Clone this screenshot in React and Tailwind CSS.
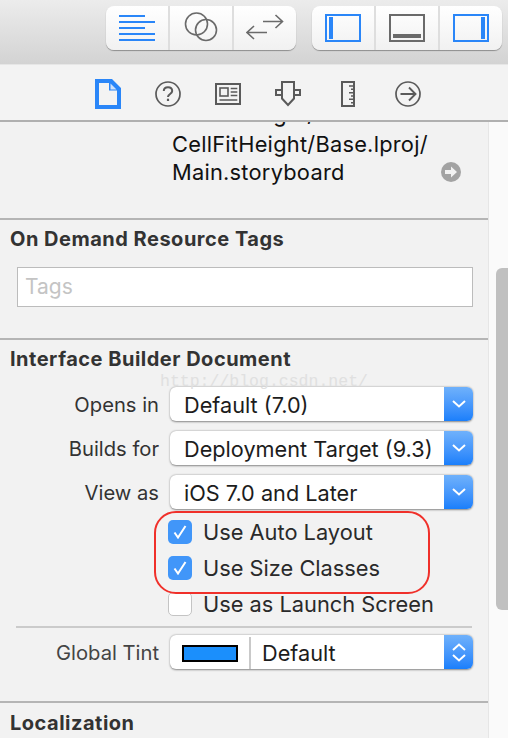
import React from 'react'

const BLUE = '#2a86f8'
const GRAY = '#6a6a6a'
const DARK = '#5a5a5a'

const ToolButton = ({ className, children }) => (
  <div className={`flex items-center justify-center border-r-2 border-[#dedede] last:border-r-0 ${className}`}>
    {children}
  </div>
)

const Group = ({ children }) => (
  <div className="flex h-[44px] w-[190px] rounded-[8px] bg-gradient-to-b from-white to-[#f1f1f1] shadow-[0_1px_1px_rgba(0,0,0,0.35)]">
    {children}
  </div>
)

const LinesIcon = () => (
  <svg width="36" height="28" viewBox="0 0 36 28" fill="none" stroke={BLUE} strokeWidth="2">
    <path d="M0 2h26M0 8h36M0 14h26M0 20h36M0 26h36" />
  </svg>
)

const CirclesIcon = () => (
  <svg width="34" height="32" viewBox="0 0 34 32" fill="none" stroke={GRAY} strokeWidth="1.6">
    <circle cx="12.5" cy="12" r="11" />
    <circle cx="22" cy="18" r="10.5" />
  </svg>
)

const SwapIcon = () => (
  <svg width="38" height="28" viewBox="0 0 38 28" fill="none" stroke={GRAY} strokeWidth="1.6">
    <path d="M17 7.5h20M29.5 1l7 6.5-7 6.5" />
    <path d="M21 18.5H1M8 12l-7 6.5L8 25" />
  </svg>
)

const PanelIcon = ({ color, bar }) => (
  <svg width="36" height="28" viewBox="0 0 36 28" fill="none">
    <rect x="1" y="1" width="34" height="26" stroke={color} strokeWidth="2" />
    <path d={bar} fill={color} />
  </svg>
)

const DocIcon = () => (
  <svg width="26" height="30" viewBox="0 0 26 30">
    <path fillRule="evenodd" fill={BLUE} d="M0 0h17l9 9v21H0zM4 4v22h18V11.5h-8V4z" />
    <path d="M15.5 4.5l6 6h-6z" fill="#cfe2fb" />
  </svg>
)

const HelpIcon = () => (
  <svg width="26" height="26" viewBox="0 0 26 26" fill="none" stroke={DARK} strokeWidth="1.7">
    <circle cx="13" cy="13" r="12" />
    <path d="M8.8 10c0-5 8.4-5 8.4 0 0 3-4.2 3-4.2 6" strokeWidth="2" />
    <path d="M13 17.7v2.3" strokeWidth="2.2" />
  </svg>
)

const NewsIcon = () => (
  <svg width="26" height="22" viewBox="0 0 26 22" fill="none" stroke={DARK} strokeWidth="2">
    <rect x="1" y="1" width="24" height="20" />
    <rect x="5" y="5" width="8" height="8" strokeWidth="1.6" />
    <path d="M15.7 5.5h6.6M15.7 9h6.6M15.7 12.5h6.6M4.5 17h17.8" strokeWidth="1.6" />
  </svg>
)

const PinIcon = () => (
  <svg width="26" height="26" viewBox="0 0 26 26" fill="none" stroke={DARK} strokeWidth="2">
    <path d="M7 1h12v16.5l-6 6.5-6-6.5z" />
    <path d="M7 9H1v5h6M19 9h6v5h-6" />
  </svg>
)

const RulerIcon = () => (
  <svg width="14" height="26" viewBox="0 0 14 26" fill="none" stroke={DARK} strokeWidth="2">
    <rect x="1" y="1" width="12" height="24" />
    <path d="M8 5h4M10 8.3h2M8 11.7h4M10 15h2M8 18.3h4M10 21.7h2" strokeWidth="1.5" />
  </svg>
)

const ArrowCircleIcon = () => (
  <svg width="26" height="26" viewBox="0 0 26 26" fill="none" stroke={DARK} strokeWidth="1.7">
    <circle cx="13" cy="13" r="12" />
    <path d="M5.5 13h15M14 6.5l6.5 6.5-6.5 6.5" strokeWidth="1.9" />
  </svg>
)

const Tab = ({ children }) => <div className="flex w-[60px] items-center justify-center">{children}</div>

const Heading = ({ children }) => (
  <h2 className="pl-[10px] text-[20px] leading-[24px] font-bold tracking-[0.5px] text-[#333]">{children}</h2>
)

const Divider = () => <div className="h-[2px] bg-[#b5b5b5]" />

const Chevron = ({ double }) => (
  <div className="flex w-[29px] flex-col items-center justify-center gap-[3px] rounded-r-[6px] bg-gradient-to-b from-[#6fb1fb] to-[#197ffb]">
    {double && (
      <svg width="14" height="8" viewBox="0 0 14 8" fill="none" stroke="white" strokeWidth="2">
        <path d="M1 7l6-5.5L13 7" />
      </svg>
    )}
    <svg width="14" height="8" viewBox="0 0 14 8" fill="none" stroke="white" strokeWidth="2">
      <path d="M1 1l6 5.5L13 1" />
    </svg>
  </div>
)

const Select = ({ children, double }) => (
  <div className="flex h-[34px] w-[303px] rounded-[6px] bg-white shadow-[0_0.5px_2px_rgba(0,0,0,0.45)]">
    <div className="flex flex-1 items-center pt-[2px] text-[21.7px] text-[#1c1c1c]">{children}</div>
    <Chevron double={double} />
  </div>
)

const Row = ({ label, children, color = 'text-[#333]' }) => (
  <div className="flex items-center gap-[11px]">
    <div className={`w-[159px] pt-[2px] text-right text-[20.2px] ${color}`}>{label}</div>
    {children}
  </div>
)

const Check = ({ checked, label }) => (
  <div className="flex h-[24px] items-center gap-[11px] pl-[168px]">
    {checked ? (
      <div className="flex h-[24px] w-[24px] items-center justify-center rounded-[5px] bg-[#4196f9]">
        <svg width="14" height="14" viewBox="0 0 14 14" fill="none" stroke="white" strokeWidth="2">
          <path d="M1.5 7.5l3.5 5L12.5 1" />
        </svg>
      </div>
    ) : (
      <div className="h-[24px] w-[24px] rounded-[5px] border border-[#c4c4c4] bg-white" />
    )}
    <span className="pt-[1px] text-[21.8px] text-[#2a2a2a]">{label}</span>
  </div>
)

export default function App() {
  return (
    <div className="relative flex h-[738px] w-[508px] flex-col overflow-hidden bg-[#f2f2f2] font-['Inter',sans-serif]">
      <div className="flex h-[64px] shrink-0 gap-[16px] bg-gradient-to-b from-[#ececec] to-[#d3d3d3] pt-[6px] pl-[106px]">
        <Group>
          <ToolButton className="w-[64px]"><LinesIcon /></ToolButton>
          <ToolButton className="w-[64px]"><CirclesIcon /></ToolButton>
          <ToolButton className="w-[62px]"><SwapIcon /></ToolButton>
        </Group>
        <Group>
          <ToolButton className="w-[64px]"><PanelIcon color={BLUE} bar="M4 3h4v22H4z" /></ToolButton>
          <ToolButton className="w-[64px]"><PanelIcon color={GRAY} bar="M4 20h28v4H4z" /></ToolButton>
          <ToolButton className="w-[62px]"><PanelIcon color={BLUE} bar="M28 3h4v22h-4z" /></ToolButton>
        </Group>
      </div>

      <div className="flex h-[58px] shrink-0 border-t border-[#e6e6e6] border-b-2 border-b-[#b0b0b0] bg-[#f3f3f3] pt-[3px] pl-[78px]">
        <Tab><DocIcon /></Tab>
        <Tab><HelpIcon /></Tab>
        <Tab><NewsIcon /></Tab>
        <Tab><PinIcon /></Tab>
        <Tab><RulerIcon /></Tab>
        <Tab><ArrowCircleIcon /></Tab>
      </div>

      <div className="flex min-h-0 flex-1">
        <div className="w-[488px] shrink-0">
          <div className="flex h-[96px] flex-col justify-end overflow-hidden pb-[32px] pl-[172px] text-[21.8px] leading-[28px] tracking-[0.25px] text-[#111]">
            <div className="mb-[2px]">CellFitHeight/</div>
            <div>CellFitHeight/Base.lproj/</div>
            <div className="flex items-center justify-between pr-[27px]">
              Main.storyboard
              <svg width="20" height="20" viewBox="0 0 20 20">
                <circle cx="10" cy="10" r="10" fill="#a3a3a3" />
                <path d="M4 8h6V4.5l6 5.5-6 5.5V12H4z" fill="#f2f2f2" />
              </svg>
            </div>
          </div>
          <Divider />

          <div className="h-[118px] pt-[7px]">
            <Heading>On Demand Resource Tags</Heading>
            <div className="mt-[16px] ml-[17px] flex h-[40px] w-[456px] items-center border border-[#bcbcbc] bg-white pl-[7px] text-[21px] text-[#c4c4c4]">
              Tags
            </div>
          </div>
          <Divider />

          <div className="h-[361px] pt-[7px]">
            <Heading>Interface Builder Document</Heading>
            <div className="mt-[16px] flex flex-col gap-[10px]">
              <Row label="Opens in"><Select><span className="pl-[14px]">Default (7.0)</span></Select></Row>
              <Row label="Builds for"><Select><span className="pl-[14px]">Deployment Target (9.3)</span></Select></Row>
              <Row label="View as"><Select><span className="pl-[14px]">iOS 7.0 and Later</span></Select></Row>
            </div>
            <div className="mt-[11px] flex flex-col gap-[12px]">
              <Check checked label="Use Auto Layout" />
              <Check checked label="Use Size Classes" />
              <Check label="Use as Launch Screen" />
            </div>
            <div className="mt-[10px] ml-[16px] h-[2px] w-[456px] bg-[#cbcbcb]" />
            <div className="mt-[7px]">
              <Row label="Global Tint" color="text-[#444]">
                <Select double>
                  <div className="flex h-full w-[81px] shrink-0 items-center justify-center border-r-2 border-[#c9c9c9]">
                    <div className="h-[17px] w-[56px] border-2 border-black bg-[#1b8ffc]" />
                  </div>
                  <span className="pl-[11px]">Default</span>
                </Select>
              </Row>
            </div>
          </div>
          <Divider />

          <div className="pt-[8px]">
            <Heading>Localization</Heading>
          </div>
        </div>

        <div className="flex-1 border-l border-[#e6e6e6] bg-[#fafafa] pt-[146px] pl-[7px]">
          <div className="h-[342px] w-[12px] rounded-l-[6px] bg-[#c0c0c0]" />
        </div>
      </div>

      <div className="pointer-events-none absolute top-[372px] left-[160px] font-['Liberation_Mono',monospace] text-[16.5px] leading-[20px] text-[#e0e0e0]">
        http://blog.csdn.net/
      </div>
      <div className="pointer-events-none absolute top-[511px] left-[154px] h-[83px] w-[276px] rounded-[22px] border-2 border-[#f0302a]" />
    </div>
  )
}
